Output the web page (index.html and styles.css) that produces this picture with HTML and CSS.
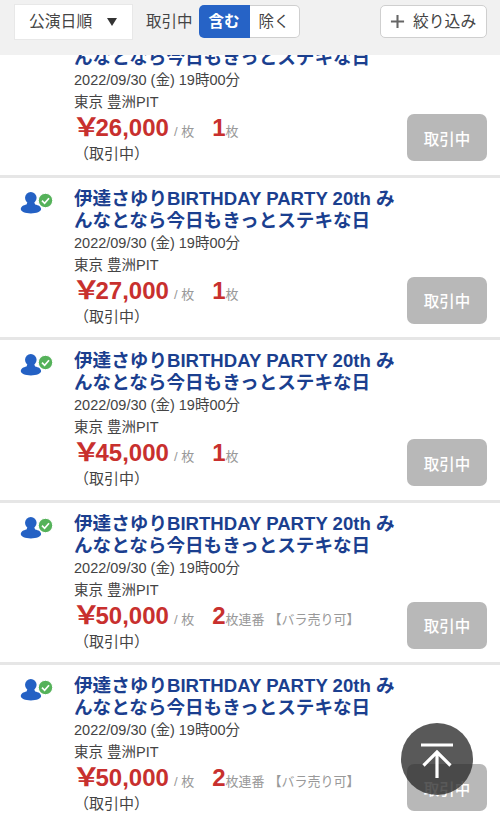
FILE: index.html
```html
<!DOCTYPE html>
<html lang="ja">
<head>
<meta charset="utf-8">
<title>チケット一覧</title>
<link rel="stylesheet" href="styles.css">
</head>
<body>
<header class="bar">
  <div class="sort"><span>公演日順</span><span class="caret"></span></div>
  <span class="state-label">取引中</span>
  <div class="toggle"><span class="on">含む</span><span class="off">除く</span></div>
  <div class="filter">
    <svg class="plus" viewBox="0 0 16 16" aria-hidden="true"><path d="M8 1v14M1 8h14"/></svg>
    <span>絞り込み</span>
  </div>
</header>
<main class="viewport">
  <div class="list">
    <article class="card">
      <div class="icon-col"><svg class="user" viewBox="0 0 32 24" aria-hidden="true"><use href="#u"/></svg></div>
      <div class="body">
        <h2 class="title">伊達さゆりBIRTHDAY PARTY 20th みんなとなら今日もきっとステキな日</h2>
        <p class="meta">2022/09/30 (金) 19時00分</p>
        <p class="meta">東京 豊洲PIT</p>
        <p class="price-row"><span class="price"><span class="yen">￥</span>26,000</span><span class="unit">/ 枚</span><span class="qty">1</span><span class="unit">枚</span></p>
        <p class="status">（取引中）</p>
      </div>
      <div class="btn">取引中</div>
    </article>
    <article class="card">
      <div class="icon-col"><svg class="user" viewBox="0 0 32 24" aria-hidden="true"><defs><g id="u"><circle cx="9.800" cy="6.800" r="5.800" fill="#2461c4"/><path d="M6.500 11h6.600l1 2.500c3.500.6 6 2.200 6 4.500 0 2.700-4.500 4.400-10.200 4.400S-.2 20.700-.2 18c0-2.300 2.600-3.900 5.700-4.500z" fill="#2461c4"/><circle cx="24.500" cy="9.500" r="7.200" fill="#55b25a" stroke="#fff" stroke-width="1"/><path d="M21 9.700l2.600 2.600 4.400-5" fill="none" stroke="#fff" stroke-width="1.700"/></g></defs><use href="#u"/></svg></div>
      <div class="body">
        <h2 class="title">伊達さゆりBIRTHDAY PARTY 20th みんなとなら今日もきっとステキな日</h2>
        <p class="meta">2022/09/30 (金) 19時00分</p>
        <p class="meta">東京 豊洲PIT</p>
        <p class="price-row"><span class="price"><span class="yen">￥</span>27,000</span><span class="unit">/ 枚</span><span class="qty">1</span><span class="unit">枚</span></p>
        <p class="status">（取引中）</p>
      </div>
      <div class="btn">取引中</div>
    </article>
    <article class="card">
      <div class="icon-col"><svg class="user" viewBox="0 0 32 24" aria-hidden="true"><use href="#u"/></svg></div>
      <div class="body">
        <h2 class="title">伊達さゆりBIRTHDAY PARTY 20th みんなとなら今日もきっとステキな日</h2>
        <p class="meta">2022/09/30 (金) 19時00分</p>
        <p class="meta">東京 豊洲PIT</p>
        <p class="price-row"><span class="price"><span class="yen">￥</span>45,000</span><span class="unit">/ 枚</span><span class="qty">1</span><span class="unit">枚</span></p>
        <p class="status">（取引中）</p>
      </div>
      <div class="btn">取引中</div>
    </article>
    <article class="card">
      <div class="icon-col"><svg class="user" viewBox="0 0 32 24" aria-hidden="true"><use href="#u"/></svg></div>
      <div class="body">
        <h2 class="title">伊達さゆりBIRTHDAY PARTY 20th みんなとなら今日もきっとステキな日</h2>
        <p class="meta">2022/09/30 (金) 19時00分</p>
        <p class="meta">東京 豊洲PIT</p>
        <p class="price-row"><span class="price"><span class="yen">￥</span>50,000</span><span class="unit">/ 枚</span><span class="qty">2</span><span class="unit">枚連番</span><span class="note">【バラ売り可】</span></p>
        <p class="status">（取引中）</p>
      </div>
      <div class="btn">取引中</div>
    </article>
    <article class="card">
      <div class="icon-col"><svg class="user" viewBox="0 0 32 24" aria-hidden="true"><use href="#u"/></svg></div>
      <div class="body">
        <h2 class="title">伊達さゆりBIRTHDAY PARTY 20th みんなとなら今日もきっとステキな日</h2>
        <p class="meta">2022/09/30 (金) 19時00分</p>
        <p class="meta">東京 豊洲PIT</p>
        <p class="price-row"><span class="price"><span class="yen">￥</span>50,000</span><span class="unit">/ 枚</span><span class="qty">2</span><span class="unit">枚連番</span><span class="note">【バラ売り可】</span></p>
        <p class="status">（取引中）</p>
      </div>
      <div class="btn">取引中</div>
    </article>
  </div>
</main>
<button class="top" type="button" aria-label="ページ上部へ">
  <svg viewBox="0 0 40 40" aria-hidden="true"><path d="M4 6h32M20 13v26M6.500 26.500L20 13 33.500 26.500"/></svg>
</button>
</body>
</html>
```
FILE: styles.css
```css
* { box-sizing: border-box; }
html, body { margin: 0; height: 100%; }
body {
  position: relative;
  width: 500px;
  height: 822px;
  overflow: hidden;
  background: #fff;
  color: #444;
  font-family: "Liberation Sans", "Noto Sans CJK JP", sans-serif;
}
p, h2 { margin: 0; }

.bar {
  height: 55px;
  background: #f1f1f1;
  display: flex;
  align-items: center;
  padding: 0 13px 12px 14px;
  position: relative;
  z-index: 1;
}
.sort {
  width: 119px;
  height: 36px;
  background: #fff;
  border: 1px solid #e8e8e8;
  display: flex;
  align-items: center;
  padding-left: 14px;
  gap: 15px;
  font-size: 15.800px;
  line-height: 20px;
  color: #444;
}
.caret {
  width: 0;
  height: 0;
  border-left: 5.500px solid transparent;
  border-right: 5.500px solid transparent;
  border-top: 8px solid #333;
}
.state-label { margin-left: 13px; font-size: 15.500px; line-height: 20px; color: #444; }
.toggle {
  margin-left: 6px;
  width: 101px;
  height: 33px;
  display: flex;
  font-size: 15.500px;
  line-height: 20px;
}
.toggle span { display: flex; align-items: center; justify-content: center; }
.toggle .on { width: 51px; border-radius: 5px 0 0 5px; background: #2663c6; color: #fff; font-weight: 700; }
.toggle .off {
  flex: 1;
  color: #444;
  background: #fff;
  border: 1px solid #cfcfcf;
  border-left: 0;
  border-radius: 0 5px 5px 0;
}
.filter {
  margin-left: auto;
  width: 107px;
  height: 33px;
  background: #fff;
  border: 1px solid #cfcfcf;
  border-radius: 5px;
  display: flex;
  align-items: center;
  padding-left: 9px;
  gap: 8px;
  font-size: 15.800px;
  line-height: 20px;
  color: #444;
}
.plus { width: 15px; height: 15px; flex: none; fill: none; stroke: #666; stroke-width: 2.200; }

.viewport { height: 767px; overflow: hidden; }
.list { margin-top: -40px; }

.card {
  height: 162.500px;
  display: flex;
  background: #fff;
  border-bottom: 3px solid #e6e6e6;
  position: relative;
}
.icon-col { width: 74px; flex: none; padding: 13px 0 0 21px; }
.user { display: block; width: 32px; height: 24px; overflow: visible; }
.body { flex: 1; min-width: 0; padding-top: 10px; }
.title {
  width: 326px;
  font-size: 18.600px;
  line-height: 22px;
  font-weight: 700;
  color: #1b3f8f;
}
.meta { font-size: 14.500px; line-height: 22px; color: #444; }
.price-row { display: flex; align-items: baseline; height: 29px; line-height: 29px; white-space: nowrap; }
.price { font-size: 24px; font-weight: 700; color: #c8302e; }
.yen {
  display: inline-block;
  width: 23.500px;
  font-size: 25px;
  transform: scaleX(1.150);
  transform-origin: left;
  margin-left: -2px;
}
.unit { margin-left: 5px; font-size: 13px; color: #999; }
.qty { margin-left: 18px; font-size: 24px; font-weight: 700; color: #c8302e; }
.qty + .unit { margin-left: 0; }
.note { margin-left: 4px; font-size: 13px; color: #999; }
.status { font-size: 15px; line-height: 23px; color: #444; }
.btn {
  position: absolute;
  right: 13px;
  top: 99px;
  width: 80px;
  height: 47px;
  background: #b8b8b8;
  border-radius: 7px;
  color: #fff;
  font-size: 15.500px;
  font-weight: 500;
  display: flex;
  align-items: center;
  justify-content: center;
}

.top {
  position: absolute;
  left: 401px;
  top: 723px;
  width: 72px;
  height: 72px;
  padding: 16px;
  border: 0;
  border-radius: 50%;
  background: rgba(42, 42, 42, 0.78);
}
.top svg { display: block; width: 40px; height: 40px; fill: none; stroke: #fff; stroke-width: 3.200; }
```
